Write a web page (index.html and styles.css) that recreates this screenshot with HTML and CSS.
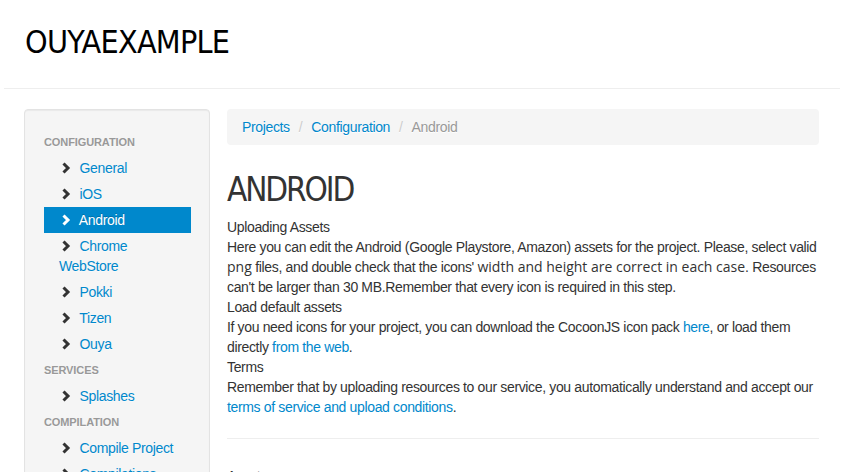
FILE: index.html
```html
<!DOCTYPE html>
<html>
<head>
<meta charset="utf-8">
<link rel="stylesheet" href="styles.css">
</head>
<body>
<header class="topbar">
  <h1 class="brand">OUYAEXAMPLE</h1>
</header>
<div class="layout">
  <aside class="sidebar">
    <ul class="nav">
      <li class="nav-header">Configuration</li>
      <li><a href="#"><svg class="chev" viewBox="0 0 14 14"><polyline points="4.5,3.5 9,8 4.5,12.5"/></svg> General</a></li>
      <li><a href="#"><svg class="chev" viewBox="0 0 14 14"><polyline points="4.5,3.5 9,8 4.5,12.5"/></svg> iOS</a></li>
      <li class="active"><a href="#"><svg class="chev" viewBox="0 0 14 14"><polyline points="4.5,3.5 9,8 4.5,12.5"/></svg> Android</a></li>
      <li><a href="#"><svg class="chev" viewBox="0 0 14 14"><polyline points="4.5,3.5 9,8 4.5,12.5"/></svg> Chrome WebStore</a></li>
      <li><a href="#"><svg class="chev" viewBox="0 0 14 14"><polyline points="4.5,3.5 9,8 4.5,12.5"/></svg> Pokki</a></li>
      <li><a href="#"><svg class="chev" viewBox="0 0 14 14"><polyline points="4.5,3.5 9,8 4.5,12.5"/></svg> Tizen</a></li>
      <li><a href="#"><svg class="chev" viewBox="0 0 14 14"><polyline points="4.5,3.5 9,8 4.5,12.5"/></svg> Ouya</a></li>
      <li class="nav-header">Services</li>
      <li><a href="#"><svg class="chev" viewBox="0 0 14 14"><polyline points="4.5,3.5 9,8 4.5,12.5"/></svg> Splashes</a></li>
      <li class="nav-header">Compilation</li>
      <li><a href="#"><svg class="chev" viewBox="0 0 14 14"><polyline points="4.5,3.5 9,8 4.5,12.5"/></svg> Compile Project</a></li>
      <li><a href="#"><svg class="chev" viewBox="0 0 14 14"><polyline points="4.5,3.5 9,8 4.5,12.5"/></svg> Compilations</a></li>
    </ul>
  </aside>
  <main class="main">
    <ul class="breadcrumb">
      <li><a href="#">Projects</a><span class="divider">/</span></li>
      <li><a href="#">Configuration</a><span class="divider">/</span></li>
      <li class="current">Android</li>
    </ul>
    <h2 class="page-title">ANDROID</h2>
    <div class="text">
      <div>Uploading Assets</div>
      <div>Here you can edit the Android (Google Playstore, Amazon) assets for the project. Please, select valid <span class="alt">png</span> files, and double check that the icons' <span class="alt">width and height are correct in each case</span>. Resources can't be larger than 30 MB.Remember that every icon is required in this step.</div>
      <div>Load default assets</div>
      <div>If you need icons for your project, you can download the CocoonJS icon pack <a href="#">here</a>, or load them directly <a href="#">from the web</a>.</div>
      <div>Terms</div>
      <div>Remember that by uploading resources to our service, you automatically understand and accept our <a href="#">terms of service and upload conditions</a>.</div>
    </div>
    <hr class="sep">
    <h3 class="section">Assets</h3>
  </main>
</div>
</body>
</html>
```
FILE: styles.css
```css
html, body {
  margin: 0;
  padding: 0;
  background: #fff;
  overflow: hidden;
}
body {
  font-family: "Liberation Sans", Arial, sans-serif;
  font-size: 14px;
  line-height: 20px;
  letter-spacing: -0.35px;
  color: #333;
}
a {
  color: #0088cc;
  text-decoration: none;
}
.alt {
  font-family: "Open Sans", sans-serif;
  letter-spacing: 0;
}
.topbar {
  margin-left: 4px;
  width: 836px;
  padding: 22px 0 26px 0;
  border-bottom: 1px solid #eee;
}
.brand {
  margin: 0 0 0 21px;
  font-family: "DejaVu Sans", sans-serif;
  font-stretch: condensed;
  font-weight: normal;
  font-size: 32px;
  line-height: 40px;
  letter-spacing: -0.75px;
  color: #000;
}
.layout {
  display: grid;
  grid-template-columns: 186px 592px;
  column-gap: 17px;
  margin: 20px 0 0 24px;
  width: 796px;
  align-items: start;
}
.sidebar {
  background: #f5f5f5;
  border: 1px solid #e3e3e3;
  border-radius: 4px;
  padding: 19px 18px 19px 19px;
  box-shadow: inset 0 1px 1px rgba(0,0,0,0.05);
}
.nav {
  list-style: none;
  margin: 0;
  padding: 0;
}
.nav-header {
  padding: 3px 0;
  font-size: 11px;
  font-weight: bold;
  line-height: 20px;
  letter-spacing: -0.1px;
  color: #999;
  text-transform: uppercase;
  text-shadow: 0 1px 0 rgba(255,255,255,0.5);
}
.nav a {
  display: block;
  padding: 3px 15px;
  line-height: 20px;
  text-shadow: 0 1px 0 rgba(255,255,255,0.5);
}
.nav .active a {
  background: #0088cc;
  color: #fff;
  text-shadow: 0 -1px 0 rgba(0,0,0,0.2);
}
.chev {
  display: inline-block;
  width: 14px;
  height: 14px;
  vertical-align: -1px;
  margin-right: 3px;
  fill: none;
  stroke: #333;
  stroke-width: 3;
  stroke-linecap: butt;
  stroke-linejoin: miter;
}
.nav .active .chev {
  stroke: #fff;
}
.main {
  min-width: 0;
}
.breadcrumb {
  list-style: none;
  margin: 0;
  padding: 8px 15px;
  background: #f5f5f5;
  border-radius: 4px;
  display: flex;
}
.breadcrumb li {
  text-shadow: 0 1px 0 #fff;
}
.divider {
  padding: 0 9px;
  color: #ccc;
}
.breadcrumb .current {
  color: #999;
}
.page-title {
  margin: 25px 0 7px 0;
  font-family: "DejaVu Sans", sans-serif;
  font-stretch: condensed;
  font-weight: normal;
  font-size: 33px;
  line-height: 40px;
  letter-spacing: -2.1px;
  color: #333;
}
.sep {
  margin: 21px 0 0 0;
  border: 0;
  border-top: 1px solid #eee;
}
.section {
  margin: 27px 0 0 0;
  font-size: 14px;
  font-weight: normal;
  line-height: 20px;
}
```
